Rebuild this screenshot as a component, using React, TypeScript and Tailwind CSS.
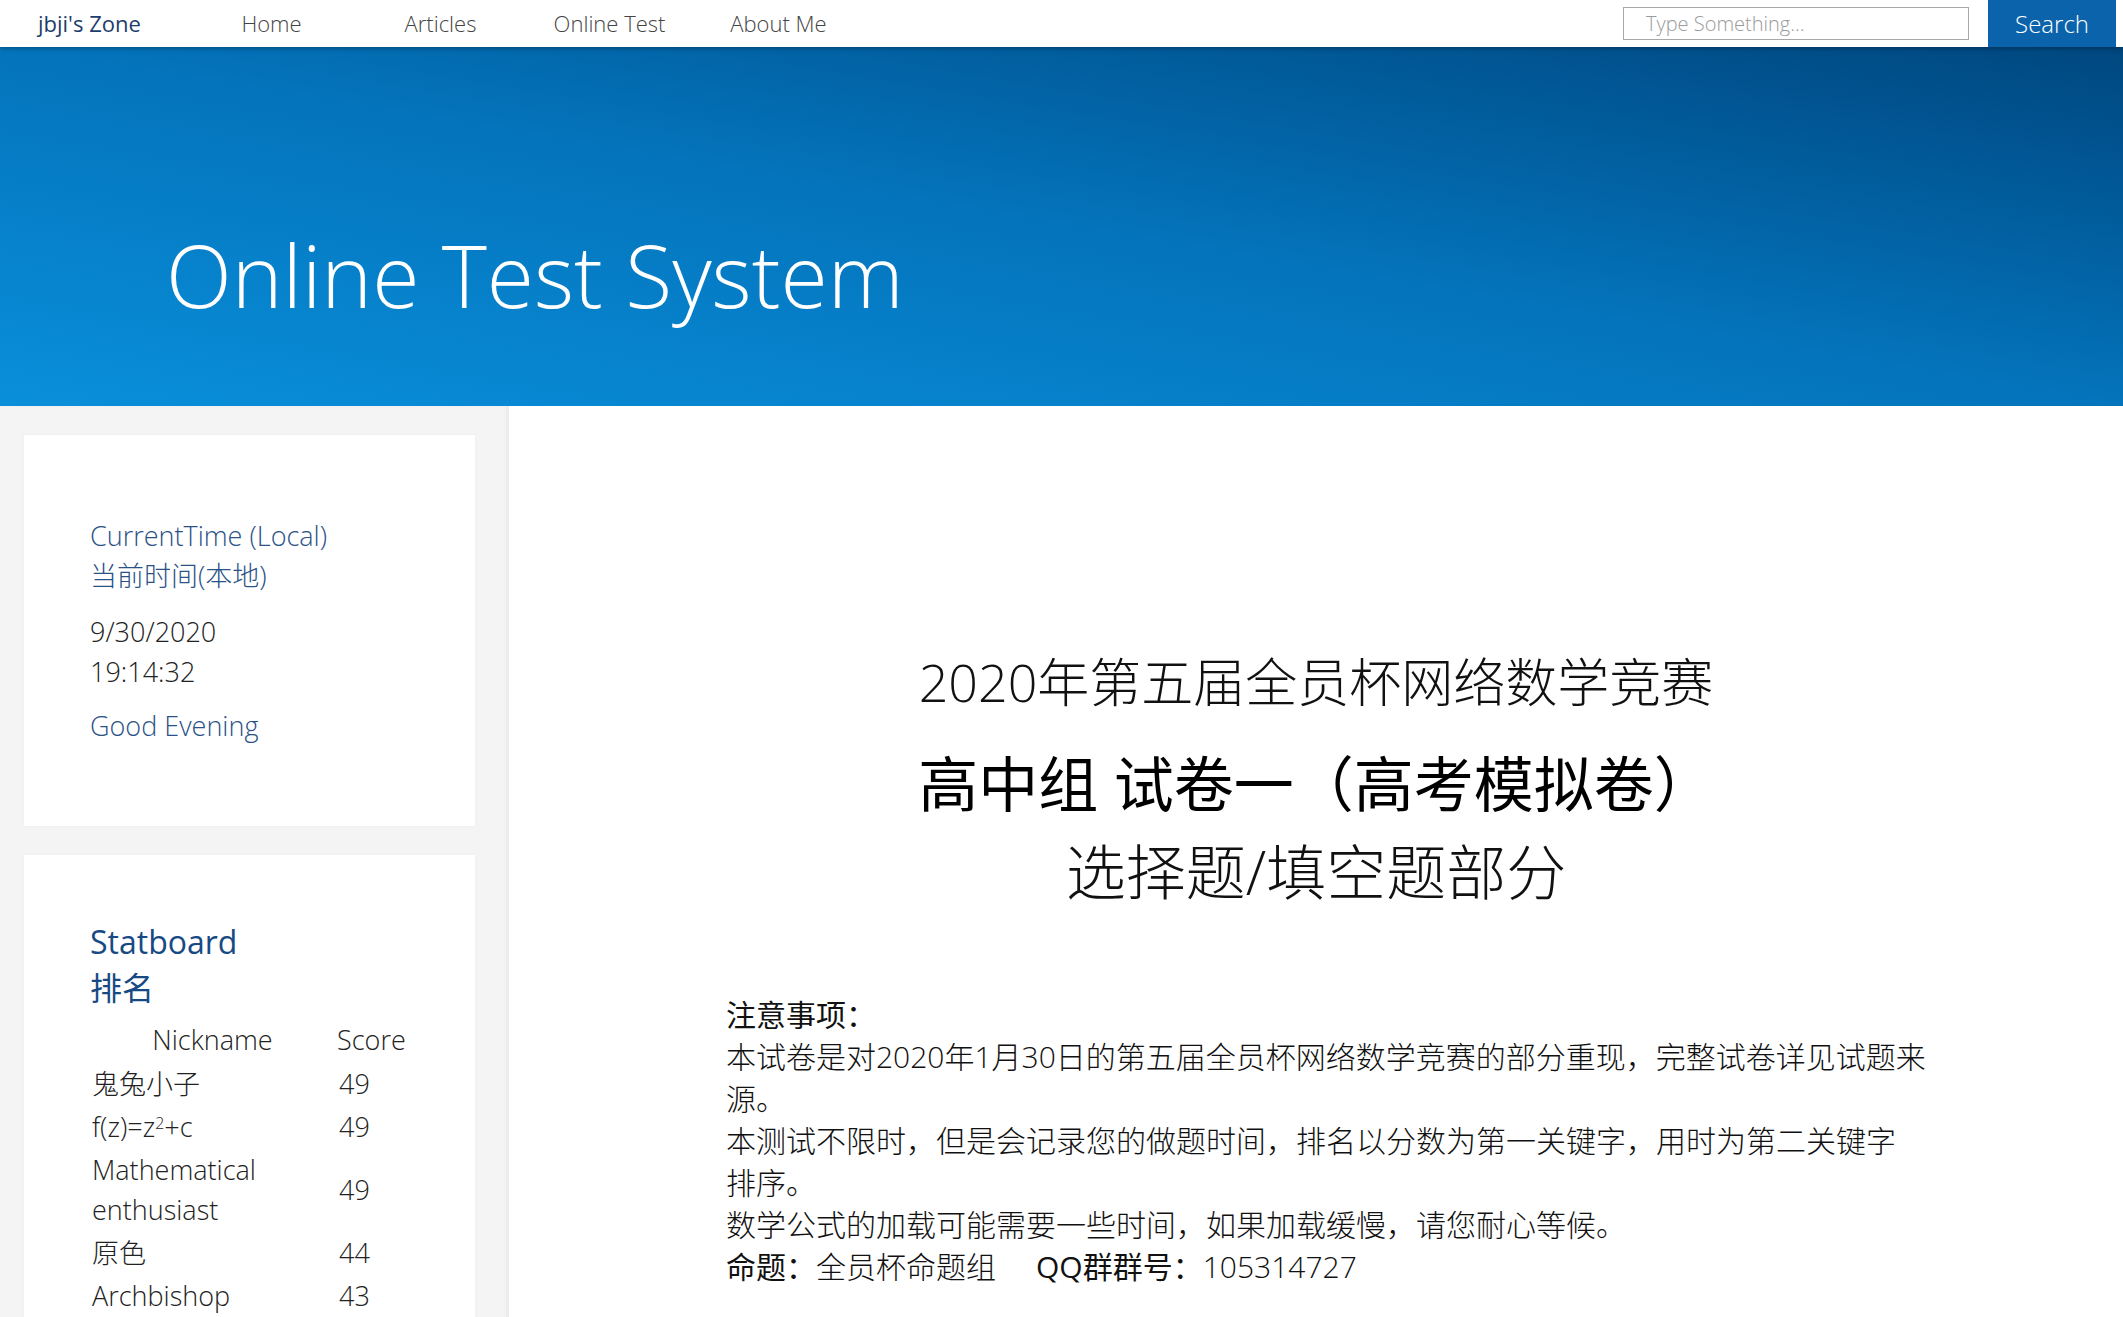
import React from 'react';

const navLinks = ['Home', 'Articles', 'Online Test', 'About Me'];

const ranks = [
  { name: '鬼兔小子', score: 49 },
  { name: 'f(z)=z²+c', score: 49, sup: true },
  { name: 'Mathematical enthusiast', score: 49 },
  { name: '原色', score: 44 },
  { name: 'Archbishop', score: 43 },
];

function NavBar() {
  return (
    <header className="relative z-10 flex h-[47px] items-center bg-white shadow-[0_2px_4px_rgba(0,0,0,0.25)]">
      <div className="w-[187px] pl-[38px] text-[22px] text-[#1d3d6c]">jbji's Zone</div>
      <nav className="flex">
        {navLinks.map((link) => (
          <a key={link} className="w-[169px] text-center text-[22px] font-light text-[#444]">
            {link}
          </a>
        ))}
      </nav>
      <div className="ml-auto flex h-full items-center">
        <input
          placeholder="Type Something..."
          className="h-[33px] w-[346px] border border-[#a8a8a8] pl-[22px] text-[20px] font-light outline-none placeholder:text-[#9a9a9a]"
        />
        <button className="ml-[19px] mr-[7px] h-full w-[128px] bg-[#0b63ab] text-[24px] font-light text-white">
          Search
        </button>
      </div>
    </header>
  );
}

function Hero() {
  return (
    <section className="h-[359px] bg-linear-to-tr from-[#0a8fda] via-[#0474bc] to-[#00477f] pl-[166px] pt-[174px]">
      <h1 className="text-[86px] font-light leading-[108px] text-white">Online Test System</h1>
    </section>
  );
}

function Sidebar() {
  return (
    <aside className="w-[509px] shrink-0 bg-[#f4f4f4] pl-[24px] pr-[34px] pt-[29px] shadow-[inset_-3px_0_3px_rgba(0,0,0,0.04)]">
      <div className="bg-white pb-[80px] pl-[66px] pt-[81px] shadow-[0_0_3px_rgba(0,0,0,0.04)]">
        <div className="text-[27px] font-light leading-[40px] text-[#2b5286]">
          <p>CurrentTime (Local)</p>
          <p>当前时间(本地)</p>
        </div>
        <div className="mt-[16px] text-[27px] font-light leading-[40px] text-[#222]">
          <p>9/30/2020</p>
          <p>19:14:32</p>
        </div>
        <p className="mt-[14px] text-[27px] font-light leading-[40px] text-[#2b5286]">Good Evening</p>
      </div>
      <div className="mt-[29px] bg-white pb-[40px] pl-[66px] pt-[64px] shadow-[0_0_3px_rgba(0,0,0,0.04)]">
        <h2 className="text-[32px] leading-[46px] text-[#174a84]">Statboard</h2>
        <h2 className="text-[32px] leading-[46px] text-[#174a84]">排名</h2>
        <table className="mt-[7px] text-[27px] font-light leading-[40px] text-[#222]">
          <thead>
            <tr>
              <th className="w-[245px] px-[2px] py-[2px] text-center font-light">Nickname</th>
              <th className="w-[72px] px-[2px] py-[2px] text-center font-light">Score</th>
            </tr>
          </thead>
          <tbody>
            {ranks.map((r) => (
              <tr key={r.name}>
                <td className="px-[2px] py-[1.5px] align-middle">
                  {r.sup ? (
                    <span>
                      f(z)=z<sup className="text-[16px]">2</sup>+c
                    </span>
                  ) : (
                    r.name
                  )}
                </td>
                <td className="px-[4px] py-[1.5px] align-middle">{r.score}</td>
              </tr>
            ))}
          </tbody>
        </table>
      </div>
    </aside>
  );
}

function MainContent() {
  return (
    <main className="flex flex-1 flex-col items-center bg-white pt-[246px] text-[#111]">
      <h3 className="text-[52px] font-light leading-[60px]">2020年第五届全员杯网络数学竞赛</h3>
      <h2 className="mt-[36px] text-[60px] font-normal leading-[72px] text-black">高中组 试卷一（高考模拟卷）</h2>
      <h3 className="mt-[16px] text-[60px] font-light leading-[72px]">选择题/填空题部分</h3>
      <div className="mt-[86px] ml-[217px] w-[1192px] self-start text-[30px] font-light leading-[42px] text-[#111]">
        <p className="font-normal">注意事项：</p>
        <p className="w-[1204px]">本试卷是对2020年1月30日的第五届全员杯网络数学竞赛的部分重现，完整试卷详见试题来源。</p>
        <p>本测试不限时，但是会记录您的做题时间，排名以分数为第一关键字，用时为第二关键字排序。</p>
        <p>数学公式的加载可能需要一些时间，如果加载缓慢，请您耐心等候。</p>
        <p>
          <span className="font-normal">命题：</span>全员杯命题组
          <span className="ml-[40px] font-normal">QQ群群号：</span>105314727
        </p>
      </div>
    </main>
  );
}

export default function App() {
  return (
    <div className="min-h-screen bg-white font-['Open_Sans','Noto_Sans_CJK_SC',sans-serif]">
      <NavBar />
      <Hero />
      <div className="flex">
        <Sidebar />
        <MainContent />
      </div>
    </div>
  );
}
